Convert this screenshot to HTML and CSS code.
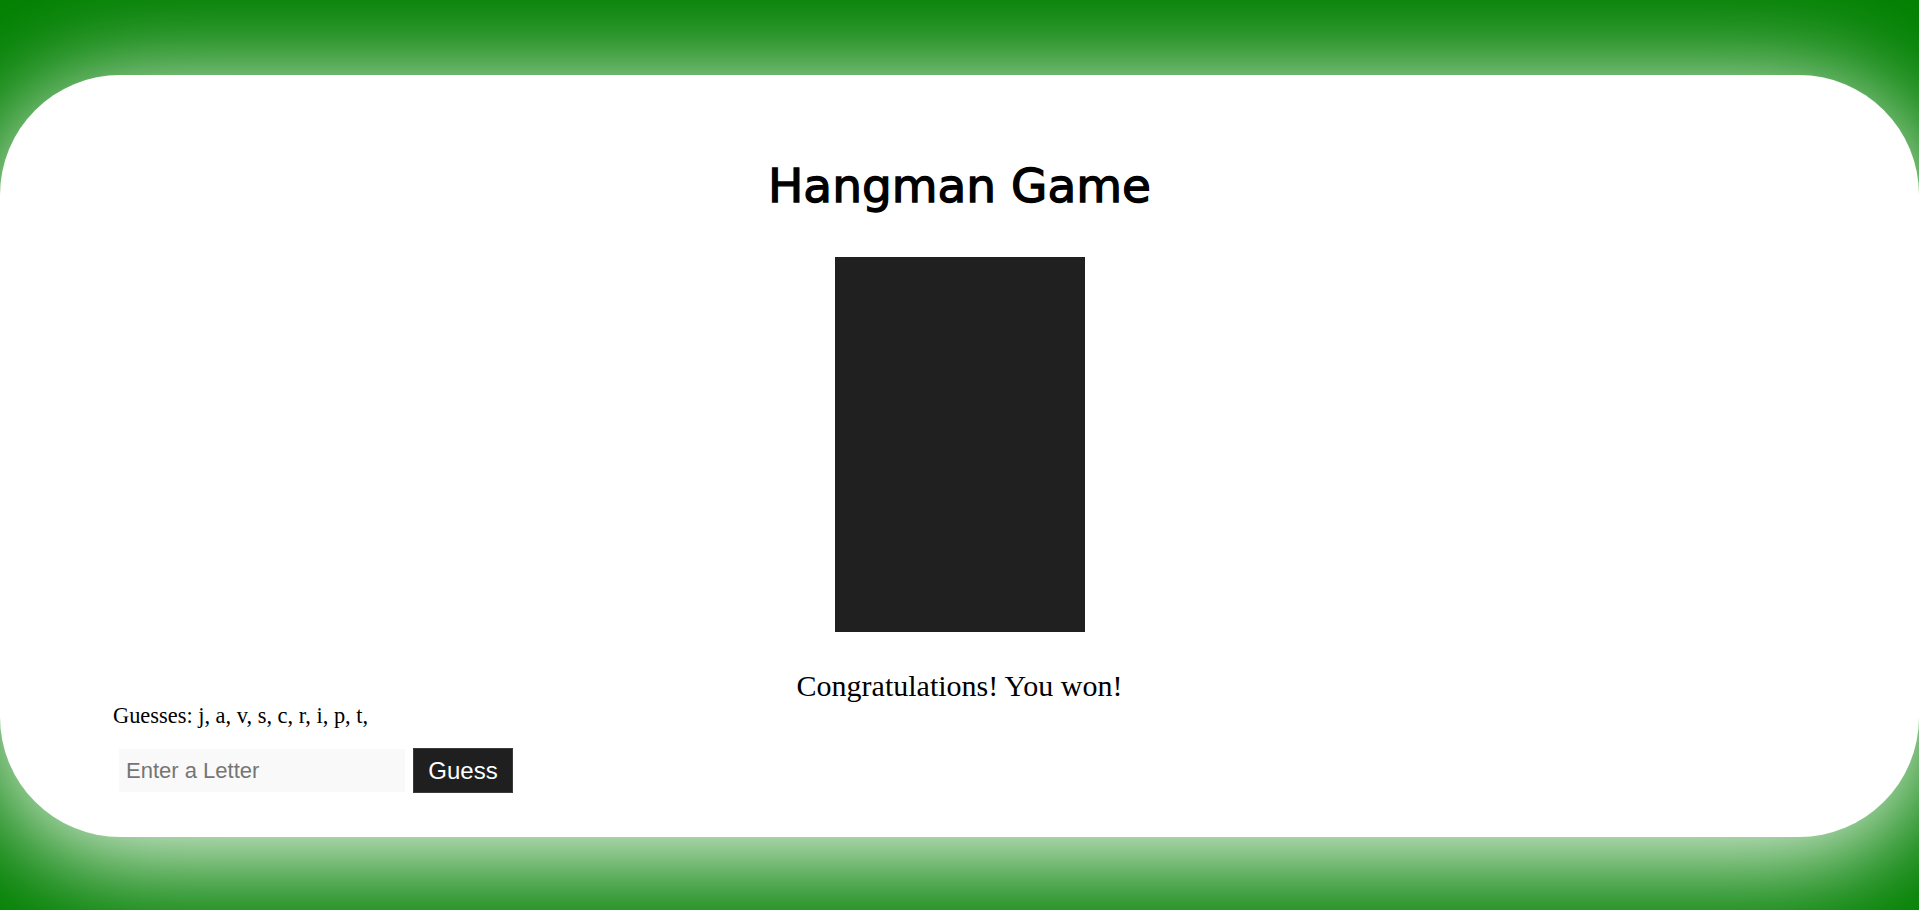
FILE: index.html
```html
<!DOCTYPE html>
<html lang="en">
<head>
<meta charset="utf-8">
<title>Hangman Game</title>
<link rel="stylesheet" href="styles.css">
</head>
<body>
  <main class="card">
    <h1 class="title">Hangman Game</h1>
    <div class="gallows"></div>
    <p class="message">Congratulations! You won!</p>
    <p class="guesses">Guesses: j, a, v, s, c, r, i, p, t,</p>
    <form class="guess-form">
      <input class="letter-input" type="text" placeholder="Enter a Letter">
      <button class="guess-btn" type="button">Guess</button>
    </form>
  </main>
</body>
</html>
```

FILE: styles.css
```css
html, body {
  margin: 0;
  padding: 0;
}

body {
  background: #008000;
  height: 910px;
  box-sizing: border-box;
  padding: 75px 0 73px;
  display: flex;
  flex-direction: column;
  overflow: hidden;
}

.card {
  flex: 1;
  background: #fff;
  border-radius: 120px;
  box-shadow: 0 16px 114px 5px #fff;
  display: flex;
  flex-direction: column;
  padding: 83px 0 0;
}

.title {
  margin: 0;
  text-align: center;
  font-family: "DejaVu Sans", sans-serif;
  font-weight: normal;
  font-size: 47px;
  line-height: 56px;
  color: #000;
  -webkit-text-stroke: 1.3px #000;
}

.gallows {
  align-self: center;
  width: 250px;
  height: 375px;
  margin-top: 43px;
  background: #202020;
}

.message {
  margin: 37px 0 0;
  text-align: center;
  font-family: "Liberation Serif", serif;
  font-size: 30px;
  line-height: 34px;
  color: #000;
}

.guesses {
  margin: 0;
  padding-left: 113px;
  font-family: "Liberation Serif", serif;
  font-size: 22.4px;
  line-height: 25px;
  color: #000;
}

.guess-form {
  display: flex;
  align-items: center;
  gap: 8px;
  margin-top: 20px;
  padding-left: 119px;
}

.letter-input {
  width: 286px;
  height: 43px;
  box-sizing: border-box;
  border: none;
  outline: none;
  background: #f9f9f9;
  padding: 0 7px;
  font-family: "Liberation Sans", Arial, sans-serif;
  font-size: 22px;
  color: #000;
}

.letter-input::placeholder {
  color: #757575;
}

.guess-btn {
  width: 100px;
  height: 45px;
  box-sizing: border-box;
  border: 1px solid #3b3b3b;
  background: #1f1f1f;
  color: #fff;
  font-family: "Liberation Sans", Arial, sans-serif;
  font-size: 24px;
  padding: 0;
  cursor: pointer;
}
```
